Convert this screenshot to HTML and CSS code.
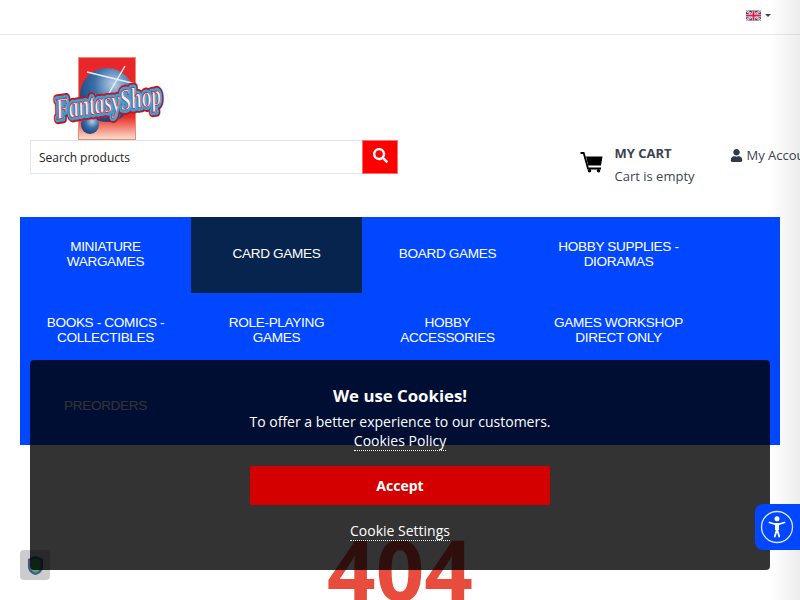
FILE: index.html
```html
<!DOCTYPE html>
<html lang="en">
<head>
<meta charset="utf-8">
<title>FantasyShop</title>
<link rel="stylesheet" href="styles.css">
</head>
<body>
<div class="page">
  <div class="topbar">
    <svg class="flag" viewBox="0 0 60 40" width="15" height="11"><rect width="60" height="40" fill="#2b3f87"/><path d="M0 0L60 40M60 0L0 40" stroke="#fff" stroke-width="8"/><path d="M0 0L60 40M60 0L0 40" stroke="#d3283f" stroke-width="3"/><path d="M30 0V40M0 20H60" stroke="#fff" stroke-width="13"/><path d="M30 0V40M0 20H60" stroke="#d3283f" stroke-width="8"/></svg>
    <span class="caret"></span>
  </div>
  <header class="header">
    <div class="logo">
      <svg viewBox="0 0 120 84" width="120" height="84">
        <defs>
          <linearGradient id="bg" x1="0" y1="0" x2="0" y2="1"><stop offset="0" stop-color="#e8262a"/><stop offset=".72" stop-color="#ea2c24"/><stop offset="1" stop-color="#fbe3cf"/></linearGradient>
          <radialGradient id="ball" cx=".62" cy=".3" r=".8"><stop offset="0" stop-color="#b9cfe6"/><stop offset=".45" stop-color="#3a6ea8"/><stop offset="1" stop-color="#143a73"/></radialGradient>
        </defs>
        <rect x="28.500" y="0.500" width="57" height="82" fill="url(#bg)" stroke="#e98a7c"/>
        <circle cx="57" cy="38" r="27" fill="url(#ball)"/>
        <circle cx="40" cy="68" r="9" fill="url(#ball)"/>
        <path d="M37 15L90 28M75 9L45 60" stroke="#dff1fb" stroke-width="1.400"/>
        <text class="logo-text logo-outer" x="58.500" y="55" text-anchor="middle" textLength="106" lengthAdjust="spacingAndGlyphs" transform="rotate(-8 58 46)">FantasyShop</text>
        <text class="logo-text logo-mid" x="58.500" y="55" text-anchor="middle" textLength="106" lengthAdjust="spacingAndGlyphs" transform="rotate(-8 58 46)">FantasyShop</text>
        <text class="logo-text logo-inner" x="58.500" y="55" text-anchor="middle" textLength="106" lengthAdjust="spacingAndGlyphs" transform="rotate(-8 58 46)">FantasyShop</text>
      </svg>
    </div>
    <div class="header-row">
      <form class="search">
        <div class="search-input">Search products</div>
        <div class="search-btn">
          <svg viewBox="0 0 512 512" width="15" height="15"><path fill="#fff" d="M505 442.700L405.300 343c-4.500-4.500-10.600-7-17-7H372c27.600-35.300 44-79.700 44-128C416 93.100 322.900 0 208 0S0 93.100 0 208s93.100 208 208 208c48.300 0 92.700-16.400 128-44v16.300c0 6.400 2.500 12.500 7 17l99.700 99.700c9.400 9.400 24.600 9.400 33.900 0l28.300-28.300c9.400-9.400 9.400-24.600.1-34zM208 336c-70.700 0-128-57.200-128-128 0-70.700 57.200-128 128-128 70.700 0 128 57.200 128 128 0 70.700-57.200 128-128 128z"/></svg>
        </div>
      </form>
      <div class="cart">
        <svg class="cart-icon" viewBox="0 0 23 21" width="23" height="21"><path d="M0.500 1h3.200L8 16.500H21" fill="none" stroke="#000" stroke-width="1.800"/><path d="M6 4.500h16.500l-1.500 9H8.200z" fill="#000"/><circle cx="9.500" cy="18.800" r="1.800" fill="#000"/><circle cx="18.500" cy="18.800" r="1.800" fill="#000"/></svg>
        <div class="cart-text">
          <div class="cart-title">MY CART</div>
          <div class="cart-sub">Cart is empty</div>
        </div>
      </div>
      <div class="account">
        <svg viewBox="0 0 448 512" width="13" height="13"><path fill="#2f3a48" d="M224 256c70.700 0 128-57.300 128-128S294.700 0 224 0 96 57.300 96 128s57.300 128 128 128zm89.600 32h-16.700c-22.200 10.200-46.900 16-72.900 16s-50.600-5.800-72.900-16h-16.700C60.200 288 0 348.200 0 422.400V464c0 26.500 21.500 48 48 48h352c26.500 0 48-21.500 48-48v-41.600c0-74.200-60.200-134.400-134.400-134.400z"/></svg>
        <span>My Account</span>
      </div>
    </div>
  </header>
  <nav class="nav">
    <a class="nav-item">MINIATURE WARGAMES</a>
    <a class="nav-item nav-active">CARD GAMES</a>
    <a class="nav-item">BOARD GAMES</a>
    <a class="nav-item">HOBBY SUPPLIES - DIORAMAS</a>
    <a class="nav-item">BOOKS - COMICS - COLLECTIBLES</a>
    <a class="nav-item">ROLE-PLAYING GAMES</a>
    <a class="nav-item">HOBBY ACCESSORIES</a>
    <a class="nav-item">GAMES WORKSHOP DIRECT ONLY</a>
    <a class="nav-item">PREORDERS</a>
  </nav>
  <h1 class="code">404</h1>
</div>
<div class="side-shadow"></div>
<div class="shield-badge">
  <svg viewBox="0 0 18 22" width="17" height="21"><path d="M9 1l8 3v8c0 5-4 8-8 9-4-1-8-4-8-9V4z" fill="#47558c"/><path d="M9 3.500l5.500 2v6.500c0 3.500-2.800 5.800-5.500 6.700-2.700-.9-5.500-3.200-5.500-6.700V5.500z" fill="#43b35e"/></svg>
</div>
<div class="cookie">
  <div class="cookie-title">We use Cookies!</div>
  <div class="cookie-text">To offer a better experience to our customers.</div>
  <a class="cookie-link">Cookies Policy</a>
  <button class="cookie-accept" type="button">Accept</button>
  <a class="cookie-settings">Cookie Settings</a>
</div>
<div class="a11y">
  <svg viewBox="0 0 36 36" width="36" height="36"><circle cx="18" cy="18" r="15.500" fill="none" stroke="#fff" stroke-width="1.300" opacity=".85"/><circle cx="18" cy="9.800" r="2.500" fill="#fff"/><path d="M10.500 13.500L15.500 15H20.500L25.500 13.500M15.800 27.500L18 20L20.200 27.500" fill="none" stroke="#fff" stroke-width="1.800" stroke-linecap="round" stroke-linejoin="round"/><path d="M18 15V21" fill="none" stroke="#fff" stroke-width="4"/></svg>
</div>
</body>
</html>
```
FILE: styles.css
```css
* { box-sizing: border-box; }
html, body { margin: 0; height: 600px; overflow: hidden; background: #fff; }
body { font-family: "Open Sans", sans-serif; color: #3a4454; position: relative; }
.page { width: 800px; height: 600px; overflow: hidden; }
.topbar { height: 35px; border-bottom: 1px solid #e7e7e7; display: flex; align-items: center; gap: 4px; padding-left: 746px; padding-bottom: 4px; }
.flag { display: block; }
.caret { width: 0; height: 0; border-left: 3px solid transparent; border-right: 3px solid transparent; border-top: 3px solid #444; }
.header { padding: 22px 0 0 30px; height: 182px; }
.logo { height: 83px; padding-left: 20px; }
.logo svg { display: block; overflow: visible; }
.logo-text { font-family: "Liberation Serif", serif; font-style: italic; font-weight: 700; font-size: 30px; }
.logo-outer { fill: none; stroke: #c4161f; stroke-width: 10px; stroke-linejoin: round; }
.logo-mid { fill: none; stroke: #2aa6e0; stroke-width: 6px; stroke-linejoin: round; }
.logo-inner { fill: #e8f4fb; stroke: #d2202a; stroke-width: .8px; }
.header-row { display: flex; align-items: flex-start; }
.search { display: flex; flex: none; width: 368px; height: 34px; }
.search-input { flex: 1; border: 1px solid #e3e6ea; border-right: 0; font-size: 12px; line-height: 33px; padding-left: 8px; color: #222; }
.search-btn { width: 36px; background: #ff0000; border: 1px solid #ff6a6a; display: flex; align-items: center; justify-content: center; padding-bottom: 4px; }
.cart { display: flex; flex: none; margin-left: 182px; gap: 11.500px; width: 150px; }
.cart-icon { margin-top: 12px; flex: none; }
.cart-title { font-size: 13px; font-weight: 700; line-height: 18px; margin-top: 4px; }
.cart-sub { font-size: 13px; line-height: 18px; margin-top: 5px; white-space: nowrap; }
.account { display: flex; flex: none; align-items: center; gap: 4px; font-size: 13px; white-space: nowrap; margin-top: 6px; margin-left: -.5px; }
.account span { display: block; }
.nav { margin: 0 20px; width: 760px; height: 228px; background: #0047ff; display: grid; grid-template-columns: repeat(4, 171px); grid-auto-rows: 76px; }
.nav-item { display: flex; align-items: center; justify-content: center; text-align: center; padding: 0 15px 3px; font: 13.600px/15px "Liberation Sans", sans-serif; letter-spacing: -.35px; color: #fff; }
.nav-active { background: #07244f; }
.code { margin: 81px 0 0; text-align: center; font: 700 85px/85px "Open Sans", sans-serif; color: #e74c3c; }
.side-shadow { position: absolute; top: 0; left: 770px; width: 30px; height: 600px; background: linear-gradient(to right, rgba(0,0,0,0), rgba(0,0,0,.07)); }
.cookie { position: absolute; left: 30px; top: 360px; width: 740px; height: 210px; padding-top: 24px; background: rgba(0,0,0,.8); border-radius: 4px; display: flex; flex-direction: column; align-items: center; color: #fff; text-align: center; }
.cookie-title { font-size: 16.800px; font-weight: 700; line-height: 24px; }
.cookie-text { font-size: 14px; line-height: 19px; margin-top: 4px; }
.cookie-link { font-size: 14px; line-height: 19px; border-bottom: 1px dotted #fff; }
.cookie-accept { width: 300px; height: 39px; margin-top: 15px; background: #d40000; border: 0; color: #fff; font: 700 14px "Open Sans", sans-serif; }
.cookie-settings { font-size: 14px; line-height: 19px; margin-top: 16px; border-bottom: 1px dotted #fff; }
.a11y { position: absolute; left: 755px; top: 504px; width: 45px; height: 46px; background: #0047ff; border-radius: 8px 0 0 8px; display: flex; align-items: center; padding-left: 4px; }
.a11y svg { display: block; }
.shield-badge { position: absolute; left: 20px; top: 550px; width: 30px; height: 30px; background: rgba(0,0,0,.2); border-radius: 4px; display: flex; align-items: center; justify-content: center; }
```
